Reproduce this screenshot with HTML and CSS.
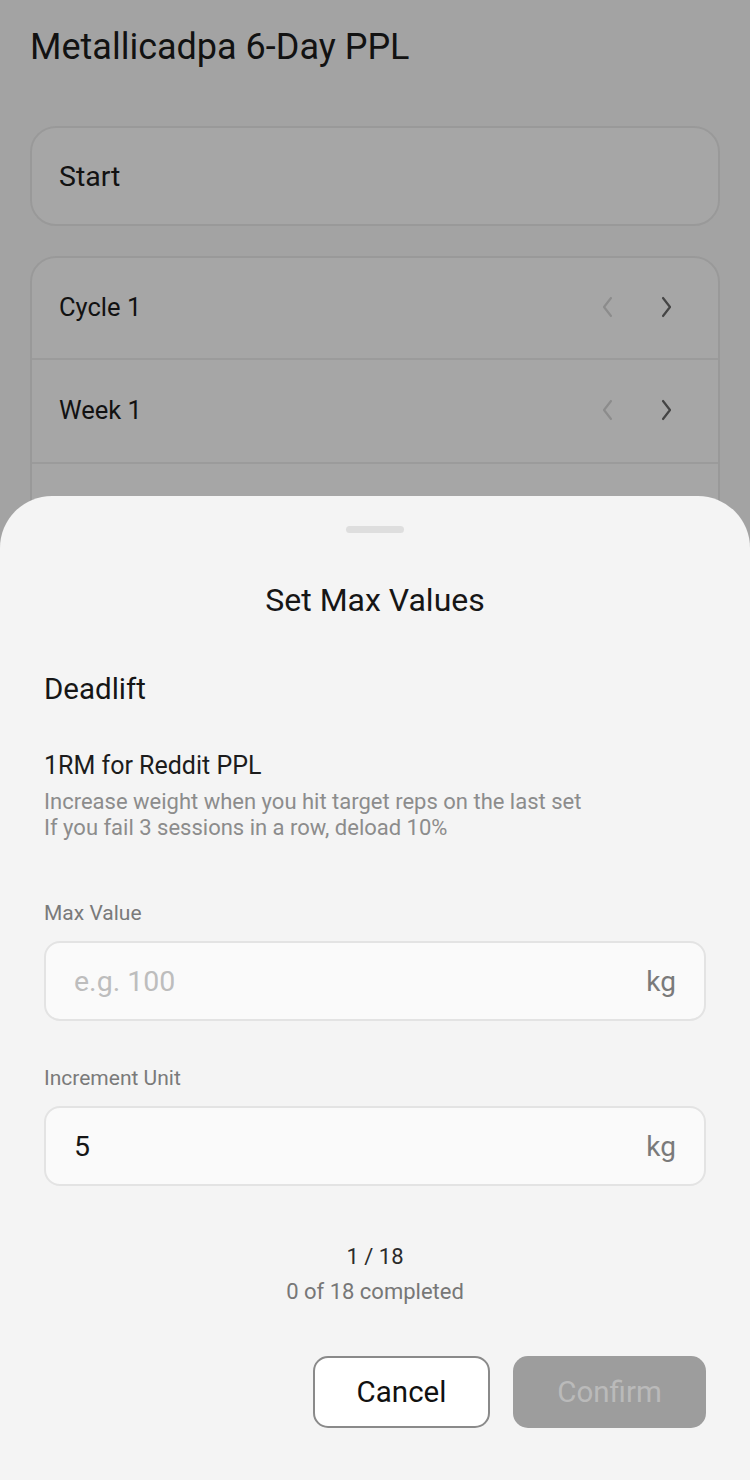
FILE: index.html
```html
<!DOCTYPE html>
<html lang="en">
<head>
    <meta charset="UTF-8" />
    <meta name="viewport" content="width=device-width, initial-scale=1.0"/>
    <title>Metallicadpa 6-Day PPL</title>
    <link rel="stylesheet" href="styles.css">
</head>
<body>
    <div class="program-page">
        <h1 class="program-title">Metallicadpa 6-Day PPL</h1>

        <div class="card start-card">Start</div>

        <div class="card">
            <div class="stepper-row">
                <span>Cycle 1</span>
                <div class="stepper-arrows">
                    <svg class="arrow disabled" width="14" height="24" viewBox="0 0 14 24"><path d="M10 3 L3 12 L10 21" /></svg>
                    <svg class="arrow" width="14" height="24" viewBox="0 0 14 24"><path d="M4 3 L11 12 L4 21" /></svg>
                </div>
            </div>
            <div class="stepper-row">
                <span>Week 1</span>
                <div class="stepper-arrows">
                    <svg class="arrow disabled" width="14" height="24" viewBox="0 0 14 24"><path d="M10 3 L3 12 L10 21" /></svg>
                    <svg class="arrow" width="14" height="24" viewBox="0 0 14 24"><path d="M4 3 L11 12 L4 21" /></svg>
                </div>
            </div>
            <div class="stepper-row">
                <span>Day 1</span>
            </div>
        </div>
    </div>

    <div class="overlay"></div>

    <div class="sheet">
        <div class="sheet-handle"></div>
        <h2 class="sheet-title">Set Max Values</h2>

        <div class="exercise-name">Deadlift</div>

        <div class="rule-title">1RM for Reddit PPL</div>
        <div class="rule-desc">
            Increase weight when you hit target reps on the last set<br>
            If you fail 3 sessions in a row, deload 10%
        </div>

        <label class="field-label">Max Value</label>
        <div class="field">
            <input type="text" placeholder="e.g. 100" />
            <span class="unit">kg</span>
        </div>

        <label class="field-label">Increment Unit</label>
        <div class="field">
            <input type="text" value="5" />
            <span class="unit">kg</span>
        </div>

        <div class="progress">
            <div class="progress-count">1 / 18</div>
            <div class="progress-done">0 of 18 completed</div>
        </div>

        <div class="sheet-actions">
            <button class="btn btn-cancel">Cancel</button>
            <button class="btn btn-confirm" disabled>Confirm</button>
        </div>
    </div>
</body>
</html>
```

FILE: styles.css
```css
* {
    box-sizing: border-box;
}

body {
    margin: 0;
    font-family: Roboto, "Noto Sans", sans-serif;
    background: #fbfbfb;
    color: #1c1c1c;
    height: 1480px;
    overflow: hidden;
}

.program-page {
    padding: 24px 30px;
}

.program-title {
    margin: 0 0 56px;
    font-size: 36px;
    font-weight: 400;
    line-height: 46px;
}

.card {
    background: #ffffff;
    border: 2px solid #ececec;
    border-radius: 26px;
    margin-bottom: 30px;
    overflow: hidden;
}

.start-card {
    height: 100px;
    padding: 0 27px;
    display: flex;
    align-items: center;
    font-size: 28.5px;
}

.stepper-row {
    height: 104px;
    padding: 0 27px;
    display: flex;
    align-items: center;
    justify-content: space-between;
    font-size: 25.5px;
    border-top: 2px solid #efefef;
}

.stepper-row:first-child {
    height: 100px;
    border-top: none;
}

.stepper-row span {
    margin-top: -2px;
}

.stepper-arrows {
    display: flex;
    gap: 44px;
    margin-right: 18px;
    margin-top: -3px;
}

.arrow path {
    fill: none;
    stroke: #6a6a6a;
    stroke-width: 2.2;
    stroke-linecap: round;
    stroke-linejoin: round;
}

.arrow.disabled path {
    stroke: #d8d8d8;
}

.overlay {
    position: fixed;
    inset: 0;
    background: rgba(0, 0, 0, 0.35);
}

.sheet {
    position: fixed;
    left: 0;
    right: 0;
    top: 496px;
    bottom: 0;
    background: #f4f4f4;
    border-radius: 52px 52px 0 0;
    padding: 30px 44px 0;
    display: flex;
    flex-direction: column;
}

.sheet-handle {
    width: 58px;
    height: 7px;
    border-radius: 4px;
    background: #dedede;
    align-self: center;
}

.sheet-title {
    margin: 47px 0 0;
    text-align: center;
    font-size: 32px;
    font-weight: 400;
    line-height: 40px;
    color: #161616;
}

.exercise-name {
    margin-top: 51px;
    font-size: 29.5px;
    line-height: 36px;
    color: #161616;
}

.rule-title {
    margin-top: 43px;
    font-size: 25px;
    line-height: 32px;
    color: #1c1c1c;
}

.rule-desc {
    margin-top: 7px;
    font-size: 22px;
    line-height: 26px;
    color: #8c8c8c;
}

.field-label {
    margin-top: 59px;
    font-size: 21px;
    line-height: 26px;
    color: #7a7a7a;
}

.field {
    margin-top: 15px;
    height: 80px;
    background: #fafafa;
    border: 2px solid #e3e3e3;
    border-radius: 16px;
    display: flex;
    align-items: center;
    padding: 0 28px;
}

.field input {
    flex: 1;
    border: none;
    outline: none;
    background: transparent;
    font-family: inherit;
    font-size: 28.5px;
    color: #161616;
    padding: 0;
}

.field input::placeholder {
    color: #bdbdbd;
}

.unit {
    font-size: 28px;
    color: #7a7a7a;
}

.field + .field-label {
    margin-top: 44px;
}

.progress {
    margin-top: 56px;
    text-align: center;
    font-size: 22px;
}

.progress-count {
    line-height: 30px;
    color: #2b2b2b;
}

.progress-done {
    line-height: 30px;
    margin-top: 5px;
    color: #777777;
}

.sheet-actions {
    margin-top: 49px;
    display: flex;
    justify-content: flex-end;
    gap: 23px;
}

.btn {
    height: 72px;
    border-radius: 15px;
    font-family: inherit;
    font-size: 29.5px;
}

.btn-cancel {
    width: 177px;
    background: #ffffff;
    border: 2px solid #8a8a8a;
    color: #111;
}

.btn-confirm {
    width: 193px;
    background: #9d9d9d;
    border: none;
    color: #bababa;
}
```
